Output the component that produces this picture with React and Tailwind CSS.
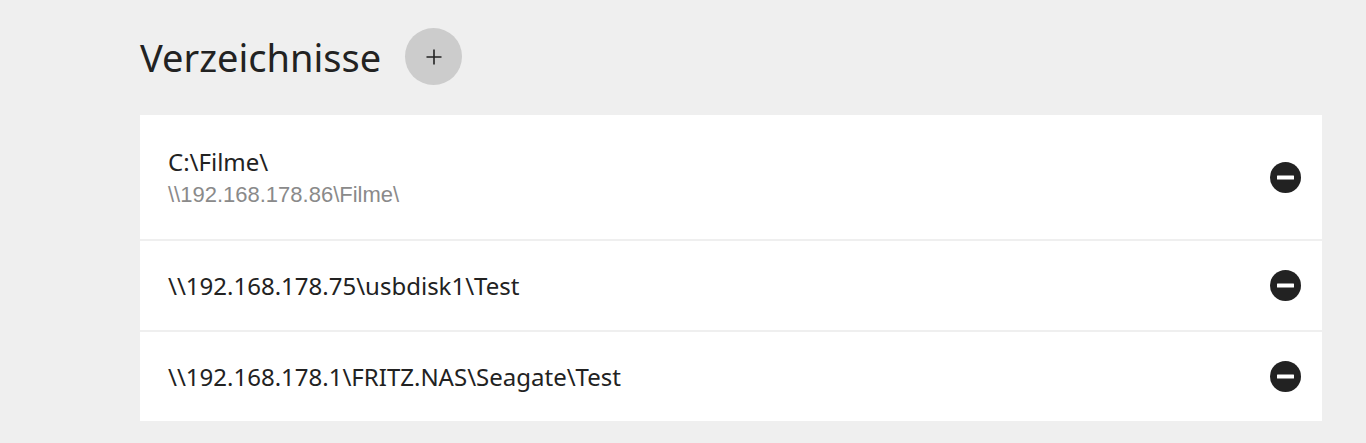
import React from 'react';

const dirs = [
    { path: 'C:\\Filme\\', unc: '\\\\192.168.178.86\\Filme\\' },
    { path: '\\\\192.168.178.75\\usbdisk1\\Test' },
    { path: '\\\\192.168.178.1\\FRITZ.NAS\\Seagate\\Test' },
];

function MinusIcon() {
    return (
        <svg width="31" height="31" viewBox="0 0 31 31">
            <circle cx="15.5" cy="15.5" r="15.5" fill="#222222" />
            <rect x="7" y="13.5" width="17" height="4" rx="0.5" fill="#ffffff" />
        </svg>
    );
}

export default function App() {
    return (
        <div className="min-h-[443px] bg-[#efefef] px-[140px] pt-[28px]" style={{ fontFamily: '"Noto Sans", sans-serif' }}>
            {/* Header */}
            <div className="flex items-center gap-[24px] h-[57px]">
                <h1 className="text-[38px] leading-none font-normal text-[#222222]">Verzeichnisse</h1>
                <button className="w-[57px] h-[57px] rounded-full bg-[#cccccc] flex items-center justify-center">
                    <svg width="16" height="16" viewBox="0 0 16 16">
                        <path d="M8 0.5V15.5M0.5 8H15.5" stroke="#222222" strokeWidth="1.6" />
                    </svg>
                </button>
            </div>

            {/* List */}
            <div className="mt-[30px] flex flex-col gap-[2px] w-[1182px]">
                {dirs.map((d, i) => (
                    <div key={i} className={`bg-white flex items-center justify-between pl-[28px] pr-[21px] ${d.unc ? 'h-[124px]' : 'h-[89px]'}`}>
                        <div className="flex flex-col">
                            <span className="text-[24px] leading-[30px] text-[#222222]">{d.path}</span>
                            {d.unc && (
                                <span className="mt-[5px] text-[22px] leading-[26px] text-[#8a8a8a]" style={{ fontFamily: '"Liberation Sans", Arial, sans-serif' }}>{d.unc}</span>
                            )}
                        </div>
                        <button className="flex items-center justify-center">
                            <MinusIcon />
                        </button>
                    </div>
                ))}
            </div>
        </div>
    );
}
